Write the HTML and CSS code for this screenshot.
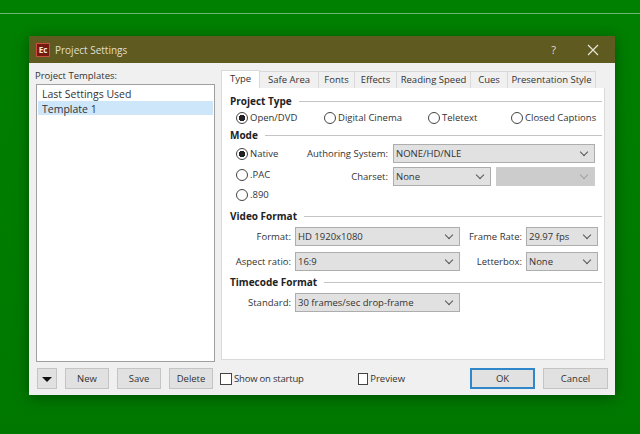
FILE: index.html
```html
<!DOCTYPE html>
<html>
  <head>
    <meta charset="UTF-8" />
    <title>Project Settings</title>
    <link rel="stylesheet" href="styles.css">
  </head>
  <body>
    <div class="stripe"></div>

    <div class="window">
      <div class="titlebar">
        <span class="app-icon">Ec</span>
        <span class="title">Project Settings</span>
        <span class="help">?</span>
        <svg class="close" width="12" height="12" viewBox="0 0 12 12">
          <path d="M1 1 L11 11 M11 1 L1 11" stroke="#e8e6d8" stroke-width="1.2" fill="none" />
        </svg>
      </div>

      <div class="main">
        <div class="templates">
          <div class="templates-label">Project Templates:</div>
          <div class="listbox">
            <div class="list-item">Last Settings Used</div>
            <div class="list-item selected">Template 1</div>
          </div>
        </div>

        <div class="settings">
          <div class="tabs">
            <div class="tab active tab-type">Type</div>
            <div class="tab tab-safe">Safe Area</div>
            <div class="tab tab-fonts">Fonts</div>
            <div class="tab tab-effects">Effects</div>
            <div class="tab tab-reading">Reading Speed</div>
            <div class="tab tab-cues">Cues</div>
            <div class="tab tab-style">Presentation Style</div>
          </div>

          <div class="panel">
            <div class="heading">Project Type</div>
            <div class="type-row">
              <label class="radio radio-open"><span class="dot checked"></span>Open/DVD</label>
              <label class="radio radio-cinema"><span class="dot"></span>Digital Cinema</label>
              <label class="radio radio-teletext"><span class="dot"></span>Teletext</label>
              <label class="radio"><span class="dot"></span>Closed Captions</label>
            </div>

            <div class="heading heading-mode">Mode</div>
            <div class="mode">
              <div class="mode-radios">
                <label class="radio"><span class="dot checked"></span>Native</label>
                <label class="radio"><span class="dot"></span>.PAC</label>
                <label class="radio"><span class="dot"></span>.890</label>
              </div>
              <div class="mode-fields">
                <span class="field-label">Authoring System:</span>
                <div class="combo combo-wide">NONE/HD/NLE</div>
                <span class="field-label">Charset:</span>
                <div class="combo">None</div>
                <div class="combo disabled"></div>
              </div>
            </div>

            <div class="heading heading-video">Video Format</div>
            <div class="format-grid">
              <span class="field-label">Format:</span>
              <div class="combo">HD 1920x1080</div>
              <span class="field-label">Frame Rate:</span>
              <div class="combo">29.97 fps</div>
              <span class="field-label">Aspect ratio:</span>
              <div class="combo">16:9</div>
              <span class="field-label">Letterbox:</span>
              <div class="combo">None</div>
            </div>

            <div class="heading heading-timecode">Timecode Format</div>
            <div class="format-grid format-standard">
              <span class="field-label">Standard:</span>
              <div class="combo">30 frames/sec drop-frame</div>
            </div>
          </div>
        </div>
      </div>

      <div class="footer">
        <button class="btn btn-menu"><span class="arrow-down"></span></button>
        <button class="btn btn-small">New</button>
        <button class="btn btn-small">Save</button>
        <button class="btn btn-small">Delete</button>
        <label class="check check-startup"><span class="box"></span>Show on startup</label>
        <label class="check check-preview"><span class="box"></span>Preview</label>
        <button class="btn btn-main btn-default">OK</button>
        <button class="btn btn-main">Cancel</button>
      </div>
    </div>
  </body>
</html>
```

FILE: styles.css
```css
body {
  margin: 0;
  height: 434px;
  overflow: hidden;
  position: relative;
  background: linear-gradient(#008000, #007800);
  font-family: "Open Sans", "Noto Sans", sans-serif;
  font-size: 9.5px;
  line-height: 14px;
  color: #333;
}
.stripe {
  height: 1px;
  margin-top: 13px;
  background-color: #6cb76c;
}

.window {
  position: absolute;
  left: 29px;
  top: 36px;
  width: 586px;
  height: 359px;
  background-color: #f0f0f0;
  box-shadow: 0 2px 14px rgba(0, 0, 0, .35);
}
.titlebar {
  height: 27px;
  display: flex;
  align-items: center;
  padding-left: 7px;
  background-color: #5f5a1f;
  color: #e0dfd0;
}
.app-icon {
  width: 12px;
  height: 12px;
  border: 1px solid #c8503c;
  background-color: #751a10;
  color: #f5e8e0;
  font-size: 8px;
  font-weight: bold;
  line-height: 12px;
  text-align: center;
}
.title {
  margin-left: 5px;
  font-size: 10px;
}
.help {
  margin-left: auto;
  font-size: 11px;
}
.close {
  margin-left: 31px;
  margin-right: 16px;
}

.main {
  display: flex;
  height: 299px;
}
.templates {
  width: 180px;
  margin-left: 6px;
  padding-top: 6px;
  display: flex;
  flex-direction: column;
}
.templates-label {
  height: 15px;
}
.listbox {
  flex: 1;
  margin-left: 1px;
  border: 1px solid #a0a0a0;
  background-color: white;
  padding: 1px;
  font-size: 10.5px;
}
.list-item {
  height: 14.5px;
  line-height: 16px;
  padding-left: 4px;
}
.selected {
  background-color: #cde6fa;
}

.settings {
  width: 384px;
  margin-left: 6px;
  padding-top: 7px;
}
.tabs {
  display: flex;
  align-items: flex-end;
  height: 18px;
}
.tab {
  box-sizing: border-box;
  height: 17px;
  margin-left: -1px;
  border: 1px solid #d9d9d9;
  border-bottom: none;
  background-color: #f0f0f0;
  text-align: center;
  line-height: 16px;
  white-space: nowrap;
}
.tab.active {
  height: 18px;
  margin-left: 0;
  background-color: white;
  line-height: 15px;
}
.tab-type { width: 39px; }
.tab-safe { width: 60px; }
.tab-fonts { width: 37px; }
.tab-effects { width: 43px; }
.tab-reading { width: 75px; }
.tab-cues { width: 38px; }
.tab-style { width: 89px; }

.panel {
  box-sizing: border-box;
  height: 272px;
  border: 1px solid #d9d9d9;
  border-top: none;
  background-color: white;
  padding: 6px 2px 0 8px;
}
.heading {
  display: flex;
  align-items: center;
  gap: 7px;
  height: 14px;
  font-size: 10px;
  font-weight: bold;
  color: #222;
  white-space: nowrap;
}
.heading::after {
  content: "";
  flex: 1;
  height: 1px;
  background-color: #c4c4c4;
}
.heading-mode { margin-top: 3px; }
.heading-video { margin-top: 7px; }
.heading-timecode { margin-top: 4px; }

.type-row {
  display: flex;
  margin-top: 3px;
  padding-left: 6px;
}
.radio {
  display: flex;
  flex: none;
  align-items: center;
  gap: 2px;
  height: 14px;
  white-space: nowrap;
}
.radio-open { width: 88px; }
.radio-cinema { width: 104px; }
.radio-teletext { width: 83px; }
.dot {
  box-sizing: border-box;
  width: 12px;
  height: 12px;
  border: 1px solid #444;
  border-radius: 50%;
  background-color: white;
}
.dot.checked {
  background: radial-gradient(circle, #222 3px, white 3.5px);
}

.mode {
  display: flex;
  margin-top: 2px;
}
.mode-radios {
  width: 64px;
  padding: 3px 0 0 6px;
  display: flex;
  flex-direction: column;
  gap: 6.5px;
}
.mode-fields {
  display: grid;
  grid-template-columns: 88px 98px 99px;
  grid-auto-rows: 19px;
  gap: 4px 5px;
  align-items: center;
}
.combo-wide {
  grid-column: span 2;
}

.format-grid {
  display: grid;
  grid-template-columns: 61px 165px 58px 72px;
  grid-auto-rows: 19px;
  gap: 6px 4px;
  align-items: center;
  margin-top: 4px;
}
.format-standard {
  margin-top: 4px;
}
.field-label {
  text-align: right;
  white-space: nowrap;
}
.combo {
  box-sizing: border-box;
  height: 19px;
  display: flex;
  align-items: center;
  justify-content: space-between;
  padding: 0 7px 0 2px;
  border: 1px solid #adadad;
  background-color: #e1e1e1;
  white-space: nowrap;
}
.combo::after {
  content: "";
  width: 5px;
  height: 5px;
  margin-left: auto;
  margin-top: -3px;
  border-right: 1px solid #555;
  border-bottom: 1px solid #555;
  transform: rotate(45deg);
}
.combo.disabled {
  background-color: #cccccc;
  border-color: #cccccc;
}
.combo.disabled::after {
  border-color: #a0a0a0;
}

.footer {
  display: flex;
  align-items: flex-start;
  margin-top: 6px;
  padding-left: 8px;
}
.btn {
  box-sizing: border-box;
  height: 21px;
  padding: 0;
  border: 1px solid #c4c4c4;
  background-color: #e1e1e1;
  font-family: inherit;
  font-size: 9.5px;
  color: #333;
}
.btn-menu {
  width: 20px;
  display: flex;
  align-items: center;
  justify-content: center;
}
.arrow-down {
  border-left: 5px solid transparent;
  border-right: 5px solid transparent;
  border-top: 5px solid #111;
  margin-top: 2px;
}
.btn-small {
  width: 44px;
  margin-left: 8px;
}
.btn-small:last-of-type {
  margin-left: 7px;
}
.btn-main {
  width: 65px;
  margin-left: 8px;
}
.btn-default {
  margin-left: 65px;
  border: 2px solid #2f86c8;
}
.check {
  display: flex;
  flex: none;
  align-items: center;
  gap: 2px;
  height: 21px;
  white-space: nowrap;
}
.check-startup {
  margin-left: 7px;
  width: 138px;
  letter-spacing: -.2px;
}
.check-preview { width: 47px; }
.box {
  box-sizing: border-box;
  width: 12px;
  height: 12px;
  border: 1px solid #444;
  background-color: white;
}
```
